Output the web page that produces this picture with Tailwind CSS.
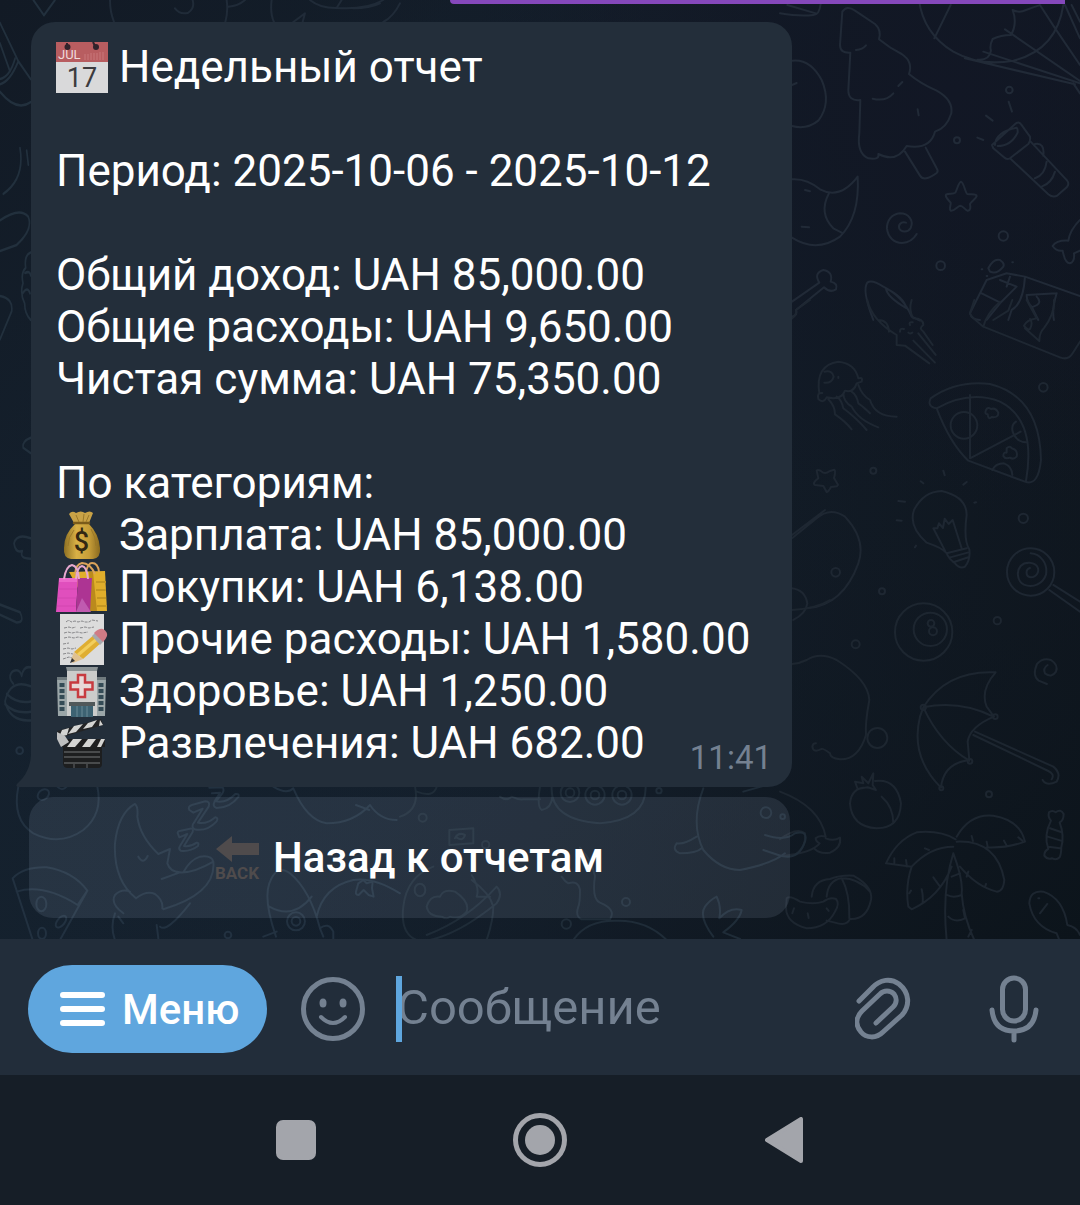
<!DOCTYPE html>
<html lang="ru">
<head>
<meta charset="utf-8">
<meta name="viewport" content="width=device-width, initial-scale=1">
<title>Недельный отчет</title>
<script src="https://cdn.jsdelivr.net/npm/@tailwindcss/browser@4"></script>
</head>
<body class="flex min-h-screen flex-col bg-[#161e27] font-['Roboto','Noto_Sans',sans-serif] text-white">

<main class="relative flex flex-1 flex-col justify-end overflow-hidden bg-linear-to-r from-[#15222f] via-[#14202d] to-[#0f161e] pt-[22px] pb-[21px]">

  <!-- doodle wallpaper -->
  <svg class="absolute inset-0 h-full w-full" viewBox="0 0 1080 939" preserveAspectRatio="xMidYMin slice" fill="none" aria-hidden="true">
    <defs>
      <linearGradient id="shade" x1="0" y1="0" x2="1" y2="1">
        <stop offset="0" stop-color="#121a25"/><stop offset=".35" stop-color="#121a25" stop-opacity=".2"/><stop offset=".6" stop-color="#121a25" stop-opacity=".1"/><stop offset="1" stop-color="#0c141b"/>
      </linearGradient>
      <radialGradient id="glow" cx=".88" cy=".1" r=".45">
        <stop offset="0" stop-color="#121725"/><stop offset="1" stop-color="#121725" stop-opacity="0"/>
      </radialGradient>
    </defs>
    <rect width="1080" height="939" fill="url(#shade)"/>
    <rect width="1080" height="939" fill="url(#glow)"/>

    <!-- upper right -->
    <g transform="translate(780 0) scale(.3333)" stroke="#212a37" stroke-width="6" stroke-linecap="round" stroke-linejoin="round">
      <path d="M0 40Q60 50 100 45Q118 45 122 12M22 15l88 26"/>
      <path d="M36 182Q90 175 125 240Q155 310 115 362Q80 390 36 378M36 255l14-6"/>
      <path d="M187 35Q200 15 225 32L285 72Q305 90 297 118Q330 145 365 162Q400 185 387 222Q420 250 470 272Q520 300 514 340Q500 385 465 395Q450 450 380 438Q350 490 295 462Q300 480 265 475Q230 460 238 400L241 300Q205 305 205 270L211 158Q180 160 180 135Z"/>
      <path d="M228 150q20-2 30-14M278 296q40 10 62-16M355 258l12-12M413 328l3 18M375 455l45 72q12 20 50-8q6-5 0-14l-33-62"/>
      <path d="M417 0Q430 100 520 155Q600 200 700 182Q830 150 850 15M512 15L463 115M780 15l42 65M555 175l330 78M610 155l290 95M675 88l225 155M822 80l78 115M855 15l45 100M875 15l25 50M698 30q20 10 40 0q20-8 40-14M698 30q15 40-5 75q-30 0-55 12q-10 20-5 35q-5 30-40 27M880 250l20 30"/>
      <circle cx="688" cy="270" r="10"/><circle cx="531" cy="421" r="9"/><circle cx="670" cy="708" r="14"/><circle cx="482" cy="797" r="13"/>
      <path d="M686 305l10 30M618 347l20 15M592 413l18 7"/>
      <path d="M636 435L708 370Q718 364 724 374L750 410Q752 425 745 432L690 475Q680 480 672 472L640 445ZM645 435q2-40 65-52q4 4 3 15q-20 40-60 40M690 475l115 108q15 12 28 3l28-25q8-10 0-20L752 425M765 432q30-5 25 35M765 535q30-10 35-50M785 560q30-10 40-45"/>
      <path d="M543 545C552 548 556 580 562 582C575 584 590 580 590 588C588 596 572 606 570 612C572 622 572 634 562 632C554 628 548 617 541 617C532 618 524 634 512 632C506 628 514 612 512 608C506 600 494 592 498 584C506 578 520 584 526 578C532 568 535 548 543 545Z"/>
      <path d="M378 668C362 664 354 675 358 686C364 698 384 698 392 684C402 662 386 640 360 640C334 642 320 664 321 686C324 714 344 728 366 729C386 728 402 716 410 702"/>
      <path d="M36 538Q80 535 120 568Q180 600 233 530Q240 650 180 710Q110 760 36 713M147 580Q115 640 160 685L185 698M75 570l15 4M65 680l22 2"/>
      <path d="M36 905L118 848Q100 820 130 810Q160 815 152 845Q175 850 168 868Q150 880 132 862L48 930Q55 945 36 950"/>
      <path d="M280 960Q245 870 262 848Q275 838 310 860Q370 890 395 950M318 865Q320 890 380 925Q370 890 318 865M395 950l25 12"/>
      <path d="M900 660Q870 690 865 722Q830 720 818 738Q830 755 848 752Q855 790 870 790Q885 785 882 760l18-8"/>
      <path d="M625 805q15-30 35-25q15 10 10 20q-20 25-40 15zM605 808h2M697 787h2M620 828h2M570 940L620 840L680 820L735 830L900 888M570 940q5 20 30 20M660 840l50 20l-50 50l-40 50M735 830q-5 80-40 100l-10 30M605 880l50 25M690 830l-10 30M830 880l-90 5q0 20 15 35l20 40M830 880q-15 50-8 80M770 890q20 20-10 30"/>
    </g>

    <!-- middle right -->
    <g transform="translate(780 300) scale(.3333)" stroke="#1e2732" stroke-width="6" stroke-linecap="round" stroke-linejoin="round">
      <path d="M262 0Q275 60 350 105V135L375 137L448 190M395 0Q385 30 400 55Q430 55 430 75Q415 85 430 95L458 135M400 122l65 66M415 100l52 65M295 60q30 0 32 35M360 95q0-12 12-8M390 75q-5-10 8-8M385 98q5 5 12 0M36 55q15-10 12-25L90 0"/>
      <path d="M583 0l-13 40q0 8 40 40L840 172Q865 182 878 160L900 125M610 80Q620 40 660 5M640 60l45-28l12-32M740 0l30 55q-30 5-38 22q10 15 18 10q10-20 0-30M735 85l43 38q0-25 15-40Q825 40 822 0"/>
      <path d="M118 280Q105 195 175 185Q225 190 235 235q15-5 10 10l-15 5Q220 280 195 272q-10 30-55 20q-10 20-25 5q-5-20 12-18M133 215q25-5 28 15q-5 20-28 18M175 230v4M145 298q20 20 20 45q30 20 50 45M170 290q15 10 20 35q40 30 70 65M190 280q0 25 25 40q20 40 80 62M215 275q15 10 20 35q15 10 35 30M235 255q10 30 35 45q15 50 80 50"/>
      <path d="M452 295Q530 240 630 252Q780 290 783 480Q775 560 735 545L565 482Q510 430 470 325Q440 320 452 295M470 325Q570 270 660 305Q770 360 738 543M570 285V475L722 395M565 482"/>
      <circle cx="552" cy="376" r="40"/><path d="M708 365q-15 10-10 30q10 30 40 32M637 510q10-20 35-20q25 10 25 35M618 330q5-10 15-3q15-5 22 12q0 15-20 12q-10 10-12-8q-10 0-5-13zM680 445q10-10 15 0q20 5 15 25q-10 10-20 3q-15 5-20-5q0-12 10-10z"/>
      <circle cx="790" cy="262" r="13"/><circle cx="280" cy="512" r="9"/><circle cx="730" cy="655" r="14"/><circle cx="167" cy="817" r="13"/><circle cx="306" cy="874" r="9"/>
      <path d="M110 512q5-5 18 5q10 5 20-3l15-5q5 5-1 25l12 20l-3 5l-18 2q-8 15-13 15l-10-18l-25-3q-10-5 10-20z"/>
      <path d="M490 512l4 14M422 544l8 6M550 554l10-8M355 603l20 2M583 608l5-1M350 661l15 1M405 742l3-5"/>
      <path d="M500 760Q490 745 440 728Q385 680 402 630Q430 575 485 573Q560 590 560 645Q550 720 568 748Q572 780 555 800Q540 808 525 790Q505 775 500 760M500 760l60-15M508 773l55-15M520 787l45-15M495 752L460 685l12 0l5-15l12 14l5-28l12 16l12-12L545 745"/>
      <circle cx="752" cy="816" r="71"/><path d="M750 804C736 808 736 830 752 832C770 832 780 814 772 800C762 786 736 784 722 798C708 814 712 844 732 854C760 866 790 850 798 824C804 790 782 762 752 760M808 870l92 65M820 855l80 50"/>
      <path d="M36 705L135 630M36 715L110 655Q150 620 195 650Q260 720 235 790Q190 915 82 925M36 865Q75 870 82 910Q78 940 40 960"/>
    </g>

    <!-- lower right -->
    <g transform="translate(780 600) scale(.3333)" stroke="#1d2630" stroke-width="6" stroke-linecap="round" stroke-linejoin="round">
      <path d="M36 30Q110 25 150 0"/>
      <circle cx="431" cy="96" r="86"/><circle cx="451" cy="88" r="50"/><circle cx="453" cy="70" r="10"/><circle cx="459" cy="94" r="12"/>
      <circle cx="652" cy="62" r="11"/><circle cx="227" cy="133" r="12"/><circle cx="627" cy="583" r="9"/>
      <path d="M803 195q-15 10-8 25q20 15 33-5q8-20-15-35q-25-8-42 12q-15 35 5 50l25 10"/>
      <path d="M36 192Q60 190 80 180Q120 155 170 180Q265 240 268 300Q255 370 258 405Q235 480 180 478Q150 475 150 460Q130 445 125 447Q100 460 97 440Q98 430 108 430"/>
      <circle cx="292" cy="414" r="30"/>
      <path d="M430 322Q500 210 647 217Q600 270 620 320L642 350Q570 380 563 425L568 480Q490 490 483 563Q390 470 420 350ZM430 322Q540 300 640 350M430 322Q480 430 568 482M580 405l225 108M585 395L820 500Q845 520 830 545Q800 560 788 540M805 513q20 10 10 25"/>
      <circle cx="430" cy="322" r="8"/><circle cx="646" cy="350" r="7"/><circle cx="570" cy="484" r="7"/><circle cx="484" cy="565" r="6"/>
      <path d="M265 563Q215 560 210 610Q215 680 290 685Q360 685 363 610Q350 535 285 543M305 590Q340 620 340 670M225 545l25 5l-5-20l20 20l15-30l-2 35l10 15l-25-8l-30 5z"/>
      <path d="M0 575Q120 620 137 710q-20-5-30 5q0 10 12 15Q95 760 0 768M137 715q25 10 43-2q5 30-30 45q-30 5-45-10M0 718Q50 680 75 700Q80 740 45 765"/>
      <path d="M527 718Q480 690 410 697Q350 720 318 790L395 800Q450 740 520 740M530 710Q570 640 640 647Q720 660 735 725Q680 745 620 742M530 725Q650 720 673 840Q670 875 650 875Q590 860 540 800M395 800Q375 860 385 920L395 928Q480 890 515 800M520 760Q485 870 500 1020M520 760Q550 840 545 880Q550 950 583 1020M515 830l25-10M500 885q20 10 45 0M505 950q20 20 50 5l-5-25M565 1010l10-20M343 775v18M378 780l3 20M435 745l12 5M575 708l4 15M620 725l3 15M672 722l8 15M715 712l12 10M425 868q5 20 3 40M460 832l18 25M388 880l5-8M560 830l5-15M615 862l3-10"/>
      <path d="M807 637q10-8 20 0q15-12 24 5q0 20-12 25q15 40 5 75q0 20-5 30q-10 10-22 3q-15 5-24-8q0-15 12-20q-15-40 8-85q-10-10-6-25M810 685l35 12M803 710l40 12M805 740l35 5"/>
      <path d="M95 890Q100 840 150 837Q180 825 220 827Q280 860 273 900Q260 960 210 957Q200 980 165 968L140 962M140 890Q145 840 185 835Q210 880 208 955M185 835q50 0 85 40M20 895Q30 885 60 905Q100 915 130 905Q150 890 168 897Q180 910 165 935Q140 985 80 985Q20 970 18 925ZM42 925l-5 15M83 940l3 14M140 925l6 8"/>
      <path d="M748 910Q750 870 790 875Q850 895 862 975Q890 980 900 1005M748 910Q760 980 830 1000l8 20M780 940l22-28M775 895h3"/>
    </g>

    <!-- lower left -->
    <g transform="translate(0 740) scale(.3333)" stroke="#223140" stroke-width="6" stroke-linecap="round" stroke-linejoin="round">
      <path d="M55 140Q35 240 100 280Q180 320 250 270Q310 220 292 140"/><ellipse cx="130" cy="164" rx="19" ry="14" transform="rotate(-40 130 164)"/><path d="M172 140q15 15 28 0"/>
      <circle cx="59" cy="32" r="10"/><circle cx="684" cy="585" r="10"/>
      <path d="M408 475Q340 420 345 310Q355 220 405 192Q415 200 412 230Q420 290 475 342L510 327L502 370Q510 395 540 397L485 417M415 350q15 25 28-2M540 397Q580 400 640 365Q635 345 600 350Q570 360 550 397M640 365Q650 460 490 508M370 520Q330 490 345 465Q365 445 390 455M408 475Q440 450 465 462Q490 480 487 505M345 520Q330 560 345 600M355 530l15 20M570 490Q500 580 480 560M470 555l5 40M370 600l20 20"/>
      <path d="M534 282Q530 274 542 272L570 266Q582 264 578 276L552 318Q570 322 590 308Q598 308 594 318Q570 336 542 332Q534 326 540 318L562 282L538 292Z"/>
      <path d="M568 210Q562 198 578 194L616 184Q632 184 626 200L594 248Q620 254 646 232Q656 234 650 244Q620 276 584 268Q572 260 582 248L608 206L580 218Z"/>
      <path d="M628 143l40-1Q674 152 666 162L648 184Q680 190 706 162Q718 160 716 170Q690 204 650 204Q636 200 644 184L660 158L636 160"/>
      <path d="M38 415Q70 380 140 382Q220 395 262 452L180 600M38 415L98 600M50 455Q130 430 233 495L262 452"/><ellipse cx="124" cy="492" rx="15" ry="22"/><ellipse cx="183" cy="545" rx="11" ry="21" transform="rotate(40 183 545)"/><ellipse cx="126" cy="580" rx="12" ry="17"/>
      <path d="M820 140Q860 165 880 145Q920 240 980 250Q1060 250 1110 195Q1140 240 1190 240M1068 195l40 15"/>
      <path d="M828 590Q790 480 808 430Q830 370 870 400Q930 450 960 565M808 500Q880 540 935 470M950 530Q970 440 1060 420Q1120 410 1200 460M790 590l40-15M960 565q25-20 40 10v30M960 565l10 25"/><circle cx="888" cy="544" r="27"/><circle cx="888" cy="544" r="13"/>
      <path d="M1075 430l15-10l10 10l18-5l-2 20l5 25l-15-5l-15-15l-15 15q-10 0-8-10z"/>
    </g>

    <!-- lower middle -->
    <g transform="translate(400 720) scale(.3333)" stroke="#1f2c38" stroke-width="6" stroke-linecap="round" stroke-linejoin="round">
      <path d="M45 200Q60 270 0 290M50 215q50 20 60-15M300 230q20 15 35 0q20 10 35 8l50 0M420 200q-10 60 5 70q30-5 32-40M455 200Q450 300 600 310Q740 300 737 200"/>
      <circle cx="510" cy="218" r="28"/><circle cx="510" cy="218" r="13"/><circle cx="585" cy="225" r="29"/><circle cx="585" cy="225" r="13"/><circle cx="666" cy="225" r="29"/><circle cx="666" cy="225" r="13"/>
      <circle cx="68" cy="293" r="12"/><circle cx="257" cy="374" r="11"/><circle cx="499" cy="612" r="14"/><circle cx="678" cy="546" r="12"/><circle cx="777" cy="212" r="8"/>
      <path d="M148 330l72-5v45l-72 5zM165 355q10-20 30-10q-5 20-25 8M80 560q10-35 40-30q10-25 45-15q45 30 35 60q-20 25-50 15q-10 10-25 0q-40 0-45-30zM10 560Q20 470 100 440M215 480Q270 520 280 560Q280 600 260 660M10 560Q0 640 50 660M80 645Q200 600 290 500Q310 520 290 550Q180 640 90 660M215 465q25 40 15 65l40 0"/>
      <ellipse cx="60" cy="510" rx="16" ry="19"/>
      <path d="M520 660Q560 600 650 602Q740 600 800 660M485 470q10 15 20 20q30-10 35 20q0 40-5 50q-10 30 10 38h85q20-30-30-50q-25-10-15-80q-10-40-25-60l-20-25"/>
      <path d="M910 205Q870 310 910 390Q960 450 1020 450Q1120 430 1155 400M890 350q-40 25-60 20q-15 20 10 30q50 0 65-15M1030 215l70-20M1095 345q60 20 90-5q40-10 30 25q-20 60-80 40l-45-15"/><circle cx="1098" cy="278" r="16"/><circle cx="1148" cy="290" r="7"/>
      <path d="M940 650Q895 590 915 560Q930 540 950 530Q965 560 958 595Q990 560 1025 570Q1020 600 970 637l50 20"/>
    </g>

    <!-- left edge -->
    <g transform="scale(.3333 .5102)" stroke="#22303d" stroke-width="5" stroke-linecap="round" stroke-linejoin="round">
      <path d="M0 45L55 120Q30 160 0 165M0 85L30 140M55 120L92 155M0 180Q50 220 92 200M0 155Q30 150 45 115M100 0l32 30L165 0"/>
      <path d="M60 290Q75 350 10 380M80 295l5 28M0 432Q60 405 85 425Q100 450 50 480L0 492M0 580Q40 585 35 610L0 665M92 495q-20 5-15 30q-15 10-8 30q-10 20 5 40q0 20 18 32M75 535q15-5 17 5M68 575q15-15 22 0"/>
      <path d="M92 858Q65 865 70 878L92 888M92 1055Q50 1045 42 1065q5 20 25 15q-10 15 25 15M0 1185L60 1200Q75 1220 50 1220L0 1205"/>
      <path d="M40 1340Q20 1325 40 1315Q60 1310 65 1325Q70 1305 92 1308M92 1345Q30 1330 15 1375Q30 1415 92 1412M20 1360q30 20 72 15M15 1380q30 20 77 15"/>
    </g>

    <!-- top edge -->
    <g transform="scale(.3333)" stroke="#202b38" stroke-width="6" stroke-linecap="round" stroke-linejoin="round">
      <path d="M330 0Q330 35 342 66M680 0Q685 35 676 66M525 25Q540 45 565 38Q585 25 578 0M685 20Q715 18 735 0M815 0Q810 40 822 66M880 66L915 40L908 66M930 0Q960 25 1010 24L1025 0M1010 24Q1100 30 1150 0M1060 25q50 0 80-15M1200 10Q1180 50 1150 66"/>
    </g>
  </svg>

  <!-- lower edge of the preceding outgoing message -->
  <div class="absolute top-0 right-[15px] h-1 w-[615px] rounded-bl-[12px] bg-[#8548bb]"></div>

  <article class="relative ml-[31px] w-[761px] max-w-[90%] rounded-[24px] rounded-bl-none bg-[#232e3a] px-[25px] pt-[19px] pb-[18px] text-[44px] leading-[52px]">
    <svg class="absolute bottom-0 -left-[15px] h-8 w-4" viewBox="0 0 16 32" fill="#232e3a" aria-hidden="true"><path d="M16 0H15Q14 18 1 29Q-1 32 3 32H16Z"/></svg>

    <h1 class="flex items-center gap-[11px]">
      <svg class="size-[52px] shrink-0" viewBox="0 0 52 52" aria-hidden="true">
        <path fill="#d9d9da" d="M0 1h52v51H0z"/><path fill="#b85d60" d="M0 1h52v20H0z"/>
        <path d="M29 13v6M32 13v6M35 12v7M38 12v7M41 12v7M44 11v8M47 11v8" stroke="#c9797a"/>
        <path d="M11 2v3M37 1l2 4" stroke="#30232b" stroke-width="2"/><circle cx="11.500" cy="6" r="3" fill="#30232b"/><circle cx="40" cy="6" r="3" fill="#30232b"/>
        <text x="2" y="18" font-family="Roboto,sans-serif" font-size="13" fill="#f0dada">JUL</text>
        <text x="26" y="46" text-anchor="middle" font-family="Roboto,sans-serif" font-size="27" fill="#3c3b3e">17</text>
      </svg>
      <span>Недельный отчет</span>
    </h1>

    <p class="mt-[52px]">Период: 2025-10-06 - 2025-10-12</p>

    <div class="mt-[52px]">
      <p>Общий доход: UAH 85,000.00</p>
      <p>Общие расходы: UAH 9,650.00</p>
      <p>Чистая сумма: UAH 75,350.00</p>
    </div>

    <h2 class="mt-[52px]">По категориям:</h2>
    <ul>
      <li class="flex items-center gap-[11px]">
        <svg class="size-[52px] shrink-0" viewBox="0 -1 52 52" aria-hidden="true">
          <defs><linearGradient id="gold"><stop stop-color="#8d6f22"/><stop offset=".35" stop-color="#d9b146"/><stop offset=".7" stop-color="#c69d38"/><stop offset="1" stop-color="#8a6a1f"/></linearGradient></defs>
          <path fill="url(#gold)" d="M19 14Q8 24 8 38Q7 48 15 49H37Q45 48 44 38Q43 24 33 14Z"/>
          <path fill="#c9a246" d="M18 13L13 4Q16 0 20 3Q25 0 29 3Q34 0 37 3L33 13Z"/>
          <path d="M18 13h15" stroke="#7a5b1a" stroke-width="2.500" stroke-linecap="round"/><path d="M20 5l3 7M28 4l-1 8M33 5l-3 7M18 20q-6 7-6 16M35 19q5 8 5 17" stroke="#9b7829" fill="none"/>
          <text x="25.500" y="41" text-anchor="middle" font-family="Roboto,sans-serif" font-weight="500" font-size="27" fill="#322813">$</text>
        </svg>
        <span>Зарплата: UAH 85,000.00</span>
      </li>
      <li class="flex items-center gap-[11px]">
        <svg class="size-[52px] shrink-0" viewBox="0 -1 52 52" fill="none" aria-hidden="true">
          <path fill="#e0ae2b" d="M13 10l36-1l2 40H35z"/><path fill="#bb8a1c" d="M33 10h4l4 39h-7z"/><path d="M40 20h10M40 28h10M41 36h9M41 44h10" stroke="#c49722" stroke-width="2"/>
          <path d="M19 12Q20 2 26 1Q34 1 39 12M30 10Q32 1 36 1Q42 1 43 10" stroke="#dba35a" stroke-width="2"/>
          <path fill="#e04fbd" d="M3 16h19l-2 34H0z"/><path fill="#ec68cb" d="M3 16h18v4H3z"/><path fill="#ad3493" d="M22 16l14 0l-2 34H20z"/><path fill="#c05bb0" d="M26 36l9 14H20z"/><path d="M3 27h18M2 36h18M1 44h19" stroke="#d247b0"/>
          <path d="M8 17Q10 4 16 3Q22 4 23 17M20 17Q21 5 26 4Q31 5 32 17" stroke="#e6a8cf" stroke-width="2"/>
        </svg>
        <span>Покупки: UAH 6,138.00</span>
      </li>
      <li class="flex items-center gap-[11px]">
        <svg class="size-[52px] shrink-0" viewBox="0 -1 52 52" fill="none" aria-hidden="true">
          <path fill="#dcdcdc" d="M4 0h44v51H4z"/>
          <path d="M10 8q3-3 5 0l4-1l3 1l4-1l3 1h4l3-2l6 1M8 14l5-1l3 1l4-1M24 14l5-1l4 1l5-1M8 19l4-1l4 1l5-1l5 1l6-1M8 24l5-1l5 1l4-1l5 1M7 30l6-1M7 35l5-1l4 1l4-1M7 40l5-1l5 1M7 45l6-2l3 1" stroke="#88888b" stroke-dasharray="3 1"/>
          <path fill="#dfae32" d="M39 20l7 8L27 45l-9-7z"/><path d="M42 24L22 41" stroke="#f2ce5c" stroke-width="3"/><path fill="#e0c191" d="M18 38l9 7l-10 4q-2-1-2-3z"/><path fill="#333" d="M16 44l-2 5l5-2z"/>
          <path fill="#a7a9ae" d="M36 22l4-4l8 9l-4 4z"/><path fill="#d07b85" d="M38 19q5-5 9-4q5 3 4 7q-1 3-4 6z"/>
        </svg>
        <span>Прочие расходы: UAH 1,580.00</span>
      </li>
      <li class="flex items-center gap-[11px]">
        <svg class="size-[52px] shrink-0" viewBox="0 -1 52 52" fill="none" aria-hidden="true">
          <path fill="#9ba6a8" d="M1 12h11v38H2zM40 12h10l-1 38H40z"/><path fill="#6f7a7e" d="M1 11h49v3H1z"/>
          <path fill="#cbcccb" d="M11 4h30v46H11z"/><path fill="#8c9496" d="M10 1h32l-1 4H11z"/>
          <path d="M6 17v28M45 17v28" stroke="#344b56" stroke-width="5" stroke-dasharray="4 2"/>
          <path fill="#50585a" d="M13 36h26v4H13z"/><path fill="#3d6272" d="M15 40h22v11H15z"/><path d="M21 40v11M26 40v11M31 40v11" stroke="#6b8995"/>
          <path fill="#e8d9d8" stroke="#c73b40" stroke-width="2.500" d="M22 9h7v7.500h7.500v7H29V31h-7v-7.500h-7.500v-7H22z"/>
        </svg>
        <span>Здоровье: UAH 1,250.00</span>
      </li>
      <li class="flex items-center gap-[11px]">
        <svg class="size-[52px] shrink-0" viewBox="0 -1 52 52" fill="none" aria-hidden="true">
          <path fill="#1d1e1f" d="M7 25h39v21q0 4-4 4H12q-5 0-5-5z"/>
          <path fill="#242425" d="M1 13L45 1l2 6L3 20z"/><path fill="#d4d4d2" d="M6 12l7-2l-2 7l-8 2zM18 8l9-2l-7 8l-8 2zM32 5l9-3l-5 7l-9 2zM44 2l3 5l-4 1z"/>
          <path fill="#1e1e1f" d="M3 21h46v8H6z"/><path fill="#d4d4d2" d="M17 21h9l-7 8h-8zM32 21h8l-6 8h-8zM45 21h4l-4 8h-4z"/>
          <path fill="#bfc0c0" d="M1 14l8 4l4 6l-8 5l-4-8z"/>
          <path d="M8 34h36M8 39h36M8 45h36" stroke="#77787a"/><path d="M18 46v4M31 46v4" stroke="#65666a"/>
        </svg>
        <span>Развлечения: UAH 682.00</span>
      </li>
    </ul>
    <time datetime="11:41" class="absolute right-[20px] bottom-[9px] text-[33px] leading-10 text-[#748191]">11:41</time>
  </article>

  <button type="button" class="relative mt-[10px] ml-[29px] flex h-[121px] w-[761px] max-w-[90%] items-center justify-center gap-[10px] rounded-[24px] bg-[#d0e4ff]/10 text-[42px] font-medium">
    <svg class="h-[46px] w-12" viewBox="0 0 48 46" fill="#4f4b4c" aria-hidden="true">
      <path d="M1 14L17 1V8H44V20H17V27Z"/>
      <text x="0" y="44" font-family="'Liberation Sans Narrow',Roboto,sans-serif" font-size="17" font-weight="700">BACK</text>
    </svg>
    <span>Назад к отчетам</span>
  </button>
</main>

<form class="flex h-[136px] shrink-0 items-center bg-[#222d3a] pt-1 pr-[41px] pl-7 text-[#748191]">
  <button type="button" class="flex h-[88px] w-[239px] shrink-0 items-center gap-4 rounded-full bg-[#5fa6de] pl-8 text-[42px] font-medium text-white">
    <svg class="h-9 w-[46px]" viewBox="0 0 46 36" stroke="#fff" stroke-width="6" stroke-linecap="round" aria-hidden="true"><path d="M3 4h39M3 18h39M3 32h39"/></svg>
    <span>Меню</span>
  </button>
  <button type="button" aria-label="Эмодзи" class="ml-[34px] shrink-0">
    <svg class="size-16" viewBox="0 0 64 64" fill="none" stroke="currentColor" stroke-width="5" stroke-linecap="round"><circle cx="32" cy="32" r="29.500"/><path d="M20 40Q32 52 44 40" stroke-width="4"/><ellipse cx="22" cy="26" rx="3.500" ry="4.500" fill="currentColor" stroke="none"/><ellipse cx="42" cy="26" rx="3.500" ry="4.500" fill="currentColor" stroke="none"/></svg>
  </button>
  <div class="relative ml-8 min-w-0 flex-1">
    <span class="absolute top-0 -left-px h-[66px] w-[6px] bg-[#5fa6de]"></span>
    <input type="text" aria-label="Сообщение" placeholder="Сообщение" class="block h-[66px] w-full bg-transparent pb-1 text-[49px] leading-[60px] outline-none placeholder:text-[#748191]">
  </div>
  <button type="button" aria-label="Прикрепить файл" class="shrink-0">
    <svg class="h-16 w-14" viewBox="0 0 56 64" fill="none" stroke="currentColor" stroke-width="5" stroke-linecap="round" stroke-linejoin="round"><path d="M4 24L17 11C25 2 36 1 44 7C55 16 55 29 47 38L28 55C21 62 11 61 6 55C0 48 1 40 7 34L25 17C29 13 35 13 39 17C42 21 42 26 38 30L21 46"/></svg>
  </button>
  <button type="button" aria-label="Голосовое сообщение" class="ml-[78px] shrink-0">
    <svg class="h-[68px] w-[50px]" viewBox="0 0 50 68" fill="none" stroke="currentColor" stroke-width="5" stroke-linecap="round"><rect x="13.500" y="3" width="23" height="43" rx="11.500"/><path d="M3 35Q5 56 25 56Q45 56 47 35M25 57v8"/></svg>
  </button>
</form>

<nav class="flex h-[130px] shrink-0 items-center justify-center text-[#a3a5ab]">
  <button type="button" aria-label="Недавние" class="flex w-[244px] justify-center"><span class="size-10 rounded-[7px] bg-[#a3a5ab]"></span></button>
  <button type="button" aria-label="Домой" class="flex w-[244px] justify-center"><span class="flex size-[54px] items-center justify-center rounded-full border-[5px] border-[#a3a5ab]"><span class="size-[30px] rounded-full bg-[#a3a5ab]"></span></span></button>
  <button type="button" aria-label="Назад" class="flex w-[244px] justify-center"><svg class="h-[46px] w-[38px]" viewBox="0 0 38 46" fill="currentColor" stroke="currentColor" stroke-width="4" stroke-linejoin="round"><path d="M2 23L36 2V44Z"/></svg></button>
</nav>
</body>
</html>
